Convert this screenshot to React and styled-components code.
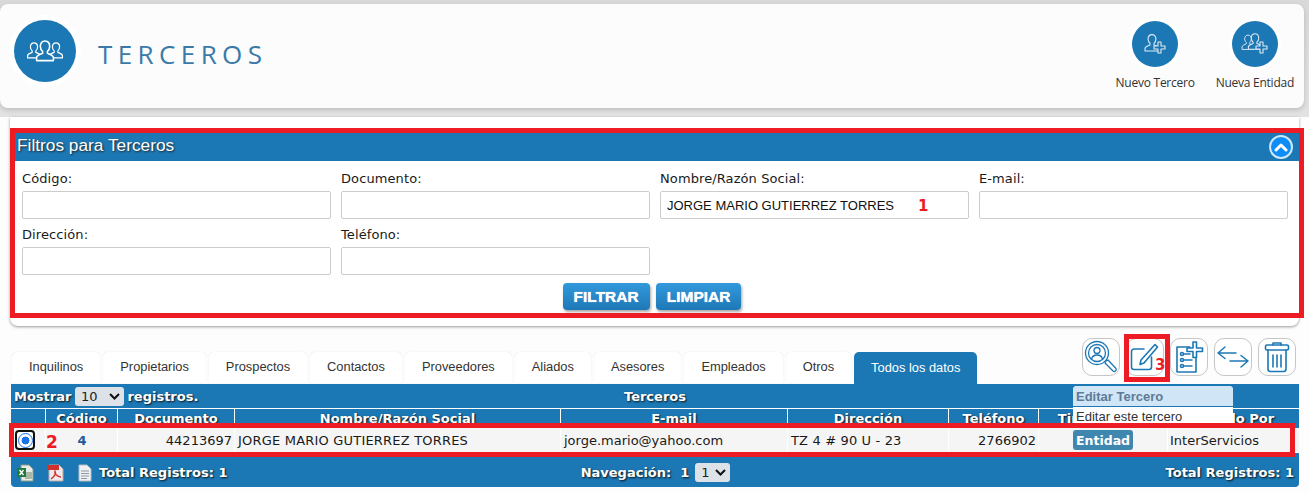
import React from "react"
import styled, { createGlobalStyle } from "styled-components"

const BLUE = "#1c78b5"
const RED = "#ed1c24"

const GlobalStyle = createGlobalStyle`
    html, body {
        margin: 0;
        padding: 0;
        background-color: #fdfdfd;
    }
    * {
        box-sizing: border-box;
    }
`
const Page = styled.div`
    position: relative;
    width: 1309px;
    height: 493px;
    overflow: hidden;
    background-color: #fdfdfd;
    font-family: "DejaVu Sans", Verdana, sans-serif;
`
const TopBand = styled.div`
    height: 117px;
    padding: 4px 5px 9px 0;
    background: linear-gradient(#d9d9d9, #e2e2e2);
`
const HeaderCard = styled.header`
    height: 104px;
    display: flex;
    justify-content: space-between;
    padding: 16px 10px 0 14px;
    background-color: #fcfcfc;
    border-radius: 8px;
    box-shadow: 0 2px 5px rgba(0, 0, 0, 0.16);
`
const Brand = styled.div`
    display: flex;
    gap: 22px;
`
const BrandCircle = styled.div`
    width: 62px;
    height: 62px;
    display: flex;
    align-items: center;
    justify-content: center;
    border-radius: 50%;
    background-color: ${BLUE};
    box-shadow: 0 0 0 5px #ffffff;
`
const Title = styled.h1`
    margin: 17px 0 0;
    font-family: "Open Sans", sans-serif;
    font-size: 26px;
    font-weight: 400;
    line-height: 34px;
    letter-spacing: 5.4px;
    color: #3a7aa8;
`
const QuickActions = styled.div`
    display: flex;
    gap: 21px;
`
const QuickAction = styled.div`
    display: flex;
    flex-direction: column;
    align-items: center;
    gap: 8px;
    margin-top: 1px;
`
const QuickCircle = styled.div`
    width: 46px;
    height: 46px;
    display: flex;
    align-items: center;
    justify-content: center;
    border-radius: 50%;
    background-color: ${BLUE};
    box-shadow: 0 0 0 3px #ffffff;
`
const QuickLabel = styled.span`
    font-family: "Open Sans", sans-serif;
    font-size: 12px;
    line-height: 16px;
    letter-spacing: -0.25px;
    color: #333333;
`
const FilterCard = styled.section`
    position: relative;
    margin: 0 10px 0 10px;
    height: 209px;
    padding: 11px 0 0 1px;
    background-color: #ffffff;
    border-radius: 0 0 8px 8px;
    box-shadow: 0 1px 3px rgba(0, 0, 0, 0.4);
`
const FilterBar = styled.div`
    height: 33px;
    display: flex;
    align-items: center;
    justify-content: space-between;
    padding: 0 6px;
    background-color: ${BLUE};
    font-family: "Liberation Sans", Arial, sans-serif;
    font-size: 17.3px;
    line-height: 22px;
    color: #ffffff;
    text-shadow: 1px 1px 2px #222222;
`
const Collapse = styled.span`
    width: 24px;
    height: 24px;
    margin-top: 5px;
    display: flex;
    align-items: center;
    justify-content: center;
    border-radius: 50%;
    border: 2px solid #cfe8fb;
    background-color: #0d8df5;
`
const FilterForm = styled.div`
    padding: 9px 11px 0 11px;
`
const FieldGrid = styled.div`
    display: grid;
    grid-template-columns: repeat(4, 309px);
    column-gap: 10px;
    row-gap: 7px;
`
const Field = styled.label`
    display: flex;
    flex-direction: column;
    gap: 4px;
    font-size: 13px;
    line-height: 17px;
    letter-spacing: 0.1px;
    color: #1a1a1a;
`
const TextBox = styled.input`
    height: 28px;
    width: 100%;
    padding: 0 6px;
    border: 1px solid #cccccc;
    border-radius: 2px;
    background-color: #ffffff;
    font-family: "Liberation Sans", Arial, sans-serif;
    font-size: 13px;
    letter-spacing: 0;
    color: #111111;
    outline: none;
`
const ButtonRow = styled.div`
    display: flex;
    justify-content: center;
    gap: 6px;
    margin-top: 8px;
    padding-right: 6px;
`
const FilterButton = styled.button`
    height: 27px;
    padding: 0 11px;
    border: none;
    border-radius: 4px;
    background: linear-gradient(#3199dc, #1e78b6);
    box-shadow: 1px 2px 3px rgba(0, 0, 0, 0.35);
    font-family: "Liberation Sans", Arial, sans-serif;
    font-size: 15.5px;
    font-weight: bold;
    color: #ffffff;
    text-shadow: 0 0 1px #ffffff;
`
const TabRow = styled.div`
    display: flex;
    justify-content: space-between;
    height: 46px;
    margin-top: 12px;
    padding: 0 13px 0 12px;
`
const Tabs = styled.nav`
    display: flex;
    align-self: flex-end;
    gap: 3px;
`
const Tab = styled.a`
    height: ${(p) => (p.$active ? "32px" : "31px")};
    padding: 0 17px 2px;
    display: flex;
    align-items: center;
    border-radius: 5px 5px 0 0;
    background-color: ${(p) => (p.$active ? BLUE : "#ffffff")};
    box-shadow: ${(p) => (p.$active ? "none" : "0 0 1px rgba(0,0,0,0.18)")};
    font-family: "Liberation Sans", Arial, sans-serif;
    font-size: 12.85px;
    color: ${(p) => (p.$active ? "#ffffff" : "#333333")};
`
const ActionBar = styled.div`
    display: flex;
    gap: 6px;
    align-self: flex-start;
`
const ActionButton = styled.button`
    width: 38px;
    height: 38px;
    padding: 0;
    display: flex;
    align-items: center;
    justify-content: center;
    border: 1px solid #c6c6c6;
    border-radius: 10px;
    background-color: #ffffff;
`
const GridPanel = styled.section`
    position: relative;
    margin: 0 10px 0 11px;
    background-color: ${BLUE};
    border-radius: 0 0 4px 4px;
    font-size: 13px;
`
const Caption = styled.div`
    height: 24px;
    display: grid;
    grid-template-columns: 1fr auto 1fr;
    align-items: center;
    padding: 0 3px;
    font-weight: bold;
    color: #ffffff;
    text-shadow: 1px 1px 2px #111111;
`
const LengthControl = styled.div`
    display: flex;
    align-items: center;
    gap: 3.5px;
`
const Dropdown = styled.span`
    height: 19px;
    width: ${(p) => p.$width}px;
    padding: 0 4px 0 6px;
    display: flex;
    align-items: center;
    justify-content: space-between;
    border-radius: 3px;
    background-color: #dde2e8;
    font-weight: normal;
    color: #222222;
    text-shadow: none;
`
const HeaderRow = styled.div`
    height: 20px;
    display: grid;
    grid-template-columns: 34px 72px 117px 326px 227px 161px 90px 129px 132px;
    border-top: 1px solid #ffffff;
    overflow: hidden;
`
const HeadCell = styled.div`
    padding-top: 1px;
    text-align: center;
    font-weight: bold;
    line-height: 17px;
    color: #ffffff;
    white-space: nowrap;
    text-shadow: 1px 1px 2px #111111;
    border-left: ${(p) => (p.$first ? "none" : "1px solid #ffffff")};
`
const DataRow = styled.div`
    height: 24px;
    display: grid;
    grid-template-columns: 34px 72px 117px 326px 227px 161px 90px 129px 132px;
    background-color: #f5f5f5;
    margin-bottom: 6px;
    box-shadow: 0 1px 0 #ffffff;
`
const DataCell = styled.div`
    display: flex;
    align-items: center;
    justify-content: ${(p) => p.$align || "flex-start"};
    padding: 0 2px 0 3px;
    color: #1a1a1a;
    letter-spacing: ${(p) => p.$spacing || 0}px;
    white-space: nowrap;
    border-left: ${(p) => (p.$first ? "none" : "1px solid #ffffff")};
`
const CodeLink = styled.a`
    font-weight: bold;
    color: #1f5c99;
`
const RadioFocus = styled.span`
    width: 20px;
    height: 20px;
    margin-left: 1px;
    display: flex;
    align-items: center;
    justify-content: center;
    border: 2px solid #101010;
    border-radius: 4px;
    background-color: #ffffff;
`
const RadioDot = styled.span`
    width: 15px;
    height: 15px;
    border-radius: 50%;
    border: 1.5px solid #1a73e8;
    background: radial-gradient(circle, #1a73e8 0 3.7px, #ffffff 4.2px);
`
const Badge = styled.span`
    margin-left: 31px;
    height: 20px;
    padding: 0 3px;
    display: flex;
    align-items: center;
    border-radius: 3px;
    background-color: #3f87ae;
    font-size: 12.5px;
    font-weight: bold;
    color: #ffffff;
`
const OwnerText = styled.span`
    margin-left: -1px;
`
const Footer = styled.footer`
    height: 29px;
    display: grid;
    grid-template-columns: 1fr auto 1fr;
    align-items: center;
    padding: 0 5px 0 6px;
    font-weight: bold;
    color: #ffffff;
    text-shadow: 1px 1px 2px #111111;
`
const FooterLeft = styled.div`
    display: flex;
    align-items: center;
    gap: 12px;
`
const FileIcons = styled.div`
    display: flex;
    gap: 13px;
    margin-right: -6px;
`
const FooterRight = styled.div`
    text-align: right;
`
const Pager = styled.div`
    display: flex;
    align-items: center;
    gap: 6px;
`
const Tooltip = styled.div`
    position: absolute;
    left: 1062px;
    top: 2px;
    width: 160px;
    height: 37px;
    overflow: hidden;
    border-radius: 4px 4px 0 0;
    background-color: #ffffff;
    font-family: "Liberation Sans", Arial, sans-serif;
    font-size: 13px;
`
const TooltipHead = styled.div`
    height: 21px;
    padding: 0 3px;
    display: flex;
    align-items: center;
    background-color: #d0e5f5;
    font-weight: bold;
    color: #5d7b98;
    border-bottom: 1px solid ${BLUE};
`
const TooltipBody = styled.div`
    padding: 2px 3px 0;
    color: #333333;
`
const FilterHighlight = styled.div`
    position: absolute;
    left: 0;
    top: 11px;
    width: 1294px;
    height: 190px;
    border: 5px solid ${RED};
    pointer-events: none;
`
const RowHighlight = styled.div`
    position: absolute;
    left: -2px;
    top: 39px;
    width: 1286px;
    height: 34px;
    border: 5px solid ${RED};
    pointer-events: none;
`
const EditHighlight = styled.div`
    position: absolute;
    left: 1124px;
    top: 334px;
    width: 46px;
    height: 48px;
    border: 5px solid ${RED};
    pointer-events: none;
`
const Marker = styled.span`
    position: absolute;
    left: ${(p) => p.$x}px;
    top: ${(p) => p.$y}px;
    font-family: "DejaVu Sans", sans-serif;
    font-size: ${(p) => p.$size}px;
    font-weight: bold;
    line-height: 1;
    color: ${RED};
`

const stroke = { fill: "none", stroke: "currentColor", strokeLinecap: "round", strokeLinejoin: "round" }

function Person({ x, y, s = 1 }) {
    return (
        <g transform={`translate(${x} ${y}) scale(${s})`}>
            <path d="M-7 13 v-2.5 c0-2 3.5-2.8 5-3.6 v-1.6 c-1.2-1-1.9-2.4-1.9-4.3 c0-2.6 1.5-4.4 3.9-4.4 s3.9 1.8 3.9 4.4 c0 1.9-.7 3.3-1.9 4.3 v1.6 c1.5.8 5 1.6 5 3.6 v2.5 z" />
        </g>
    )
}

function GroupIcon() {
    return (
        <svg width="38" height="24" viewBox="0 0 38 24" color="#ffffff" {...stroke} strokeWidth="1.3">
            <Person x={8} y={7} s={0.92} />
            <Person x={30} y={7} s={0.92} />
            <g fill={BLUE}><Person x={19} y={6} s={1.2} /></g>
        </svg>
    )
}

function AddPersonIcon() {
    return (
        <svg width="26" height="26" viewBox="0 0 26 26" color="#dfeaf3" {...stroke} strokeWidth="1.1">
            <Person x={10} y={7} s={1} />
            <path fill={BLUE} d="M16 11 h3 v4 h4 v3 h-4 v4 h-3 v-4 h-4 v-3 h4 z" />
        </svg>
    )
}

function AddGroupIcon() {
    return (
        <svg width="30" height="26" viewBox="0 0 30 26" color="#dfeaf3" {...stroke} strokeWidth="1.1">
            <Person x={8} y={7} s={0.85} />
            <g fill={BLUE}><Person x={15} y={6} s={0.95} /></g>
            <path fill={BLUE} d="M20 11 h3 v4 h4 v3 h-4 v4 h-3 v-4 h-4 v-3 h4 z" />
        </svg>
    )
}

function ChevronUp() {
    return (
        <svg width="14" height="10" viewBox="0 0 14 10" fill="none" stroke="#ffffff" strokeWidth="3" strokeLinecap="round" strokeLinejoin="round">
            <path d="M2 8 L7 3 L12 8" />
        </svg>
    )
}

function SearchPersonIcon() {
    return (
        <svg width="34" height="34" viewBox="0 0 34 34" color={BLUE} {...stroke} strokeWidth="1.3">
            <circle cx="13" cy="13" r="11.5" />
            <circle cx="13" cy="13" r="8.5" />
            <circle cx="13" cy="10.5" r="3" />
            <path d="M7.5 19 c.8-3 3-4 5.5-4 s4.700 1 5.500 4" />
            <path d="M22 21 L24 20 L32 28.500 A2 2 0 0 1 29 31 L21 23 Z" />
        </svg>
    )
}

function EditIcon() {
    return (
        <svg width="30" height="30" viewBox="0 0 30 30" color={BLUE} {...stroke} strokeWidth="1.6">
            <path d="M14 7 H4 a2.500 2.500 0 0 0 -2.500 2.500 V25 a2.500 2.500 0 0 0 2.500 2.500 H19 a2.500 2.500 0 0 0 2.500 -2.500 V15" />
            <path d="M25 2.500 L27.500 5 L14 21 L10 22.500 L11 18 Z" />
        </svg>
    )
}

function NotesPlusIcon() {
    return (
        <svg width="32" height="34" viewBox="0 0 32 34" color={BLUE} {...stroke} strokeWidth="1.6">
            <path d="M17 7 H4 V32 H23 V15" />
            <circle cx="9" cy="14" r="1.500" />
            <circle cx="9" cy="20" r="1.500" />
            <circle cx="9" cy="26" r="1.500" />
            <path d="M11 14 H17 M11 20 H19 M11 26 H19" />
            <path d="M20 2 h3.500 v6 h6 v3.500 h-6 v6 h-3.500 v-6 h-6 v-3.500 h6 z" fill="#ffffff" />
        </svg>
    )
}

function TransferIcon() {
    return (
        <svg width="34" height="24" viewBox="0 0 34 24" color={BLUE} {...stroke} strokeWidth="1.5">
            <path d="M9 2 L2 8 L9 13.500 M2 8 H20" />
            <path d="M25 10.500 L32 16 L25 22 M32 16 H14" />
        </svg>
    )
}

function TrashIcon() {
    return (
        <svg width="26" height="32" viewBox="0 0 26 32" color={BLUE} {...stroke} strokeWidth="1.6">
            <path d="M9 4 V2 H17 V4" />
            <rect x="1.500" y="4" width="23" height="5" rx="1.500" />
            <path d="M4 9 V28 a2.500 2.500 0 0 0 2.500 2.500 H19.500 a2.500 2.500 0 0 0 2.500 -2.500 V9" />
            <path d="M9 14 V26 M13 14 V26 M17 14 V26" />
        </svg>
    )
}

function SelectArrow() {
    return (
        <svg width="11" height="7" viewBox="0 0 11 7" fill="none" stroke="#111111" strokeWidth="2">
            <path d="M1 1 L5.500 5.500 L10 1" />
        </svg>
    )
}

function ExcelIcon() {
    return (
        <svg width="17" height="18" viewBox="0 0 17 18">
            <path d="M4 1 H12 L16 5 V17 H4 Z" fill="#e6ebe6" stroke="#8a9a8a" />
            <rect x="8" y="8" width="7" height="7" fill="#a9b8a9" />
            <rect x="0" y="4" width="9" height="9" fill="#1e7a3d" />
            <path d="M2.500 6 L6.500 11 M6.500 6 L2.500 11" stroke="#ffffff" strokeWidth="1.300" />
        </svg>
    )
}

function PdfIcon() {
    return (
        <svg width="17" height="18" viewBox="0 0 17 18">
            <path d="M2 1 H12 L16 5 V17 H2 Z" fill="#f1e9e9" stroke="#b9a9a9" />
            <rect x="1" y="1" width="11" height="5" fill="#d2322d" />
            <path d="M4 15 C8 12 9 9 8 7 C7 9 10 13 14 13" fill="none" stroke="#d2322d" strokeWidth="1.400" />
        </svg>
    )
}

function DocIcon() {
    return (
        <svg width="16" height="18" viewBox="0 0 16 18">
            <path d="M2 1 H10 L14 5 V17 H2 Z" fill="#eef1f3" stroke="#b4bcc2" />
            <path d="M4 7 H12 M4 9.500 H12 M4 12 H12 M4 14.500 H10" stroke="#8f989f" strokeWidth="1" />
        </svg>
    )
}

const tabNames = ["Inquilinos", "Propietarios", "Prospectos", "Contactos", "Proveedores", "Aliados", "Asesores", "Empleados", "Otros"]
const columns = ["", "Código", "Documento", "Nombre/Razón Social", "E-mail", "Dirección", "Teléfono", "Tipo Tercero", "Creado Por"]

function App() {
    return (
        <Page>
            <GlobalStyle />
            <TopBand>
                <HeaderCard>
                    <Brand>
                        <BrandCircle><GroupIcon /></BrandCircle>
                        <Title>TERCEROS</Title>
                    </Brand>
                    <QuickActions>
                        <QuickAction>
                            <QuickCircle><AddPersonIcon /></QuickCircle>
                            <QuickLabel>Nuevo Tercero</QuickLabel>
                        </QuickAction>
                        <QuickAction>
                            <QuickCircle><AddGroupIcon /></QuickCircle>
                            <QuickLabel>Nueva Entidad</QuickLabel>
                        </QuickAction>
                    </QuickActions>
                </HeaderCard>
            </TopBand>

            <FilterCard>
                <FilterBar>
                    <span>Filtros para Terceros</span>
                    <Collapse><ChevronUp /></Collapse>
                </FilterBar>
                <FilterForm>
                    <FieldGrid>
                        <Field>Código:<TextBox readOnly /></Field>
                        <Field>Documento:<TextBox readOnly /></Field>
                        <Field>Nombre/Razón Social:<TextBox readOnly value="JORGE MARIO GUTIERREZ TORRES" /></Field>
                        <Field>E-mail:<TextBox readOnly /></Field>
                        <Field>Dirección:<TextBox readOnly /></Field>
                        <Field>Teléfono:<TextBox readOnly /></Field>
                    </FieldGrid>
                    <ButtonRow>
                        <FilterButton>FILTRAR</FilterButton>
                        <FilterButton>LIMPIAR</FilterButton>
                    </ButtonRow>
                </FilterForm>
                <FilterHighlight />
                <Marker $x={908} $y={82} $size={15}>1</Marker>
            </FilterCard>

            <TabRow>
                <Tabs>
                    {tabNames.map((name) => (
                        <Tab key={name}>{name}</Tab>
                    ))}
                    <Tab $active>Todos los datos</Tab>
                </Tabs>
                <ActionBar>
                    <ActionButton><SearchPersonIcon /></ActionButton>
                    <ActionButton><EditIcon /></ActionButton>
                    <ActionButton><NotesPlusIcon /></ActionButton>
                    <ActionButton><TransferIcon /></ActionButton>
                    <ActionButton><TrashIcon /></ActionButton>
                </ActionBar>
            </TabRow>

            <GridPanel>
                <Caption>
                    <LengthControl>
                        Mostrar
                        <Dropdown $width={49}>10<SelectArrow /></Dropdown>
                        registros.
                    </LengthControl>
                    <span>Terceros</span>
                </Caption>
                <HeaderRow>
                    {columns.map((col, i) => (
                        <HeadCell key={col} $first={i === 0}>{col}</HeadCell>
                    ))}
                </HeaderRow>
                <DataRow>
                    <DataCell $first><RadioFocus><RadioDot /></RadioFocus></DataCell>
                    <DataCell $align="center"><CodeLink>4</CodeLink></DataCell>
                    <DataCell $align="flex-end">44213697</DataCell>
                    <DataCell $spacing={0.2}>JORGE MARIO GUTIERREZ TORRES</DataCell>
                    <DataCell>jorge.mario@yahoo.com</DataCell>
                    <DataCell $spacing={0.15}>TZ 4 # 90 U - 23</DataCell>
                    <DataCell $align="flex-end">2766902</DataCell>
                    <DataCell><Badge>Entidad</Badge></DataCell>
                    <DataCell><OwnerText>InterServicios</OwnerText></DataCell>
                </DataRow>
                <Footer>
                    <FooterLeft>
                        <FileIcons>
                            <ExcelIcon />
                            <PdfIcon />
                            <DocIcon />
                        </FileIcons>
                        Total Registros: 1
                    </FooterLeft>
                    <Pager>
                        Navegación:&nbsp; 1
                        <Dropdown $width={35}>1<SelectArrow /></Dropdown>
                    </Pager>
                    <FooterRight>Total Registros: 1</FooterRight>
                </Footer>
                <RowHighlight />
                <Marker $x={35} $y={50} $size={17}>2</Marker>
                <Tooltip>
                    <TooltipHead>Editar Tercero</TooltipHead>
                    <TooltipBody>Editar este tercero</TooltipBody>
                </Tooltip>
            </GridPanel>

            <EditHighlight />
            <Marker $x={1155} $y={358} $size={15}>3</Marker>
        </Page>
    )
}

export default App
